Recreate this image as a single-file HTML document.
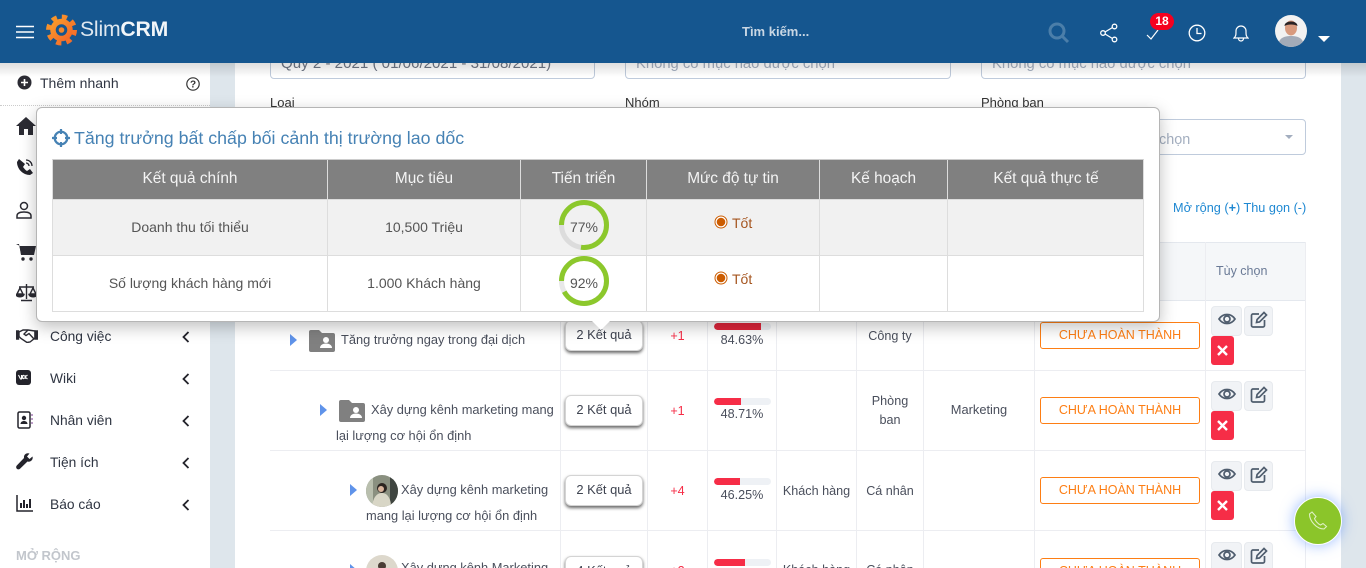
<!DOCTYPE html>
<html lang="vi"><head><meta charset="utf-8"><title>SlimCRM</title>
<style>
*{box-sizing:border-box}
html,body{margin:0;padding:0;width:1366px;height:568px;overflow:hidden;background:#dee6ec;font-family:"Liberation Sans","Noto Sans CJK SC",sans-serif;color:#4a4f5c}
body{position:relative}
#root{position:absolute;left:0;top:0;width:1366px;height:568px;overflow:hidden}
.a{position:absolute;white-space:nowrap}
.c{text-align:center}
.t{font-size:12.6px;line-height:16px}
.tr{font-size:12.85px;line-height:16px}
.card{position:absolute;left:235px;top:0;width:1106px;height:568px;background:#fff}
.inp{position:absolute;background:#fff;border:1px solid #bfcbdc;border-radius:4px}
.ph{color:#a3aebf;font-size:14.8px}
.vl{position:absolute;top:242px;width:1px;background:#ecedf1}
.hl{position:absolute;left:270px;width:1036px;height:1px;background:#ecedf1}
.kq{position:absolute;left:565px;width:78px;height:31px;background:#fff;border:1px solid #d4d4d4;border-radius:6px;box-shadow:0 2px 3px rgba(0,0,0,.6);font-size:12.9px;font-weight:500;text-align:center;line-height:27px;color:#3e4350}
.st{position:absolute;left:1040px;width:160px;height:27px;border:1px solid #fd7e14;border-radius:3px;color:#fd7e14;font-size:12.5px;text-align:center;line-height:25px;background:#fff}
.bar{position:absolute;left:714px;width:57px;height:7px;background:#eef1f5;border-radius:4px;overflow:hidden}
.bar i{display:block;height:7px;background:#f62d47;border-radius:4px 0 0 4px}
.ib{position:absolute;background:#f1f3f6;border:1px solid #e7eaee;border-radius:4px}
.del{position:absolute;left:1211px;width:23px;height:29px;background:#f62d47;border-radius:3px}
.tri{position:absolute;width:0;height:0;border-left:7px solid #5f93ea;border-top:6.5px solid transparent;border-bottom:6.5px solid transparent}
.nav{font-size:13.8px;font-weight:500;color:#2f3542;left:50px}
.hd{position:absolute;top:160px;height:39px;background:#808080;color:#f4f4f4;font-size:15.4px;line-height:38px;text-align:center;border-right:1px solid #ddd}
.td{position:absolute;height:56px;border-right:1px solid #ddd;border-bottom:1px solid #ddd;text-align:center;font-size:14px;color:#555;line-height:54px}
</style></head><body><div id="root">

<div class="card"></div>

<!-- filters -->
<div class="inp" style="left:270px;top:40px;width:325px;height:39px"></div>
<div class="inp" style="left:625px;top:40px;width:326px;height:39px"></div>
<div class="inp" style="left:981px;top:40px;width:325px;height:39px"></div>
<div class="a" style="left:281px;top:56px;font-size:15.1px;line-height:16px;color:#6e7685">Quý 2 - 2021 ( 01/06/2021 - 31/08/2021)</div>
<div class="a ph" style="left:636px;top:56px;line-height:16px">Không có mục nào được chọn</div>
<div class="a ph" style="left:992px;top:56px;line-height:16px">Không có mục nào được chọn</div>
<div class="a" style="left:270px;top:95px;font-size:13px;line-height:16px;color:#333">Loại</div>
<div class="a" style="left:625px;top:95px;font-size:13px;line-height:16px;color:#333">Nhóm</div>
<div class="a" style="left:981px;top:95px;font-size:13px;line-height:16px;color:#333">Phòng ban</div>
<div class="inp" style="left:981px;top:119px;width:325px;height:36px"></div>
<div class="a ph" style="left:1159px;top:132px;line-height:16px;font-size:14.4px">chọn</div>
<div class="a" style="left:1285px;top:135px;width:0;height:0;border-left:4px solid transparent;border-right:4px solid transparent;border-top:4px solid #a3aebf"></div>
<div class="a" style="left:1173px;top:200px;font-size:12.7px;line-height:16px;color:#1e88d2">Mở rộng (<b>+</b>) Thu gọn (-)</div>

<!-- table -->
<div class="a" style="left:1035px;top:242px;width:271px;height:59px;background:#f5f7f9;border:1px solid #e4e8ee"></div>
<div class="a" style="left:270px;top:242px;width:765px;height:58px;background:#f5f7f9"></div>
<div class="hl" style="top:370px"></div><div class="hl" style="top:450px"></div><div class="hl" style="top:530px"></div>
<div class="vl" style="left:560px;height:326px"></div><div class="vl" style="left:647px;height:326px"></div>
<div class="vl" style="left:707px;height:326px"></div><div class="vl" style="left:776px;height:326px"></div>
<div class="vl" style="left:856px;height:326px"></div><div class="vl" style="left:923px;height:326px"></div>
<div class="vl" style="left:1034px;height:326px"></div><div class="vl" style="left:1205px;height:326px"></div>
<div class="vl" style="left:1305px;height:326px"></div>
<div class="a" style="left:1216px;top:263px;font-size:12.5px;line-height:16px;font-weight:500;color:#6a7a96">Tùy chọn</div>

<!-- tree column -->
<div class="tri" style="left:290px;top:334px"></div>
<svg class="a" style="left:308px;top:329px" width="28" height="24" viewBox="0 0 28 24"><path d="M3 1h8l3 3h11a2 2 0 0 1 2 2v15a2 2 0 0 1-2 2H3a2 2 0 0 1-2-2V3a2 2 0 0 1 2-2z" fill="#808080"/><circle cx="18" cy="11" r="3" fill="#fff"/><path d="M12 19c0-6 12-6 12 0z" fill="#fff"/></svg>
<div class="a tr" style="left:341px;top:332px;color:#4a4f5c">Tăng trưởng ngay trong đại dịch</div>

<div class="tri" style="left:320px;top:404px"></div>
<svg class="a" style="left:338px;top:399px" width="28" height="24" viewBox="0 0 28 24"><path d="M3 1h8l3 3h11a2 2 0 0 1 2 2v15a2 2 0 0 1-2 2H3a2 2 0 0 1-2-2V3a2 2 0 0 1 2-2z" fill="#808080"/><circle cx="18" cy="11" r="3" fill="#fff"/><path d="M12 19c0-6 12-6 12 0z" fill="#fff"/></svg>
<div class="a tr" style="left:371px;top:402px">Xây dựng kênh marketing mang</div>
<div class="a tr" style="left:336px;top:428px">lại lượng cơ hội ổn định</div>

<div class="tri" style="left:350px;top:484px"></div>
<svg class="a" style="left:366px;top:475px" width="32" height="32" viewBox="0 0 32 32"><defs><clipPath id="cp"><circle cx="16" cy="16" r="16"/></clipPath></defs><g clip-path="url(#cp)"><rect width="32" height="32" fill="#8a9080"/><rect x="24" width="8" height="32" fill="#3f4540"/><rect x="0" width="7" height="32" fill="#b9bfae"/><path d="M6 32c1-10 5-14 10-14s9 5 9 14z" fill="#d8d6c6"/><circle cx="16" cy="13" r="5" fill="#2b2420"/><circle cx="15" cy="14" r="3" fill="#d8b49c"/></g></svg>
<div class="a tr" style="left:401px;top:482px">Xây dựng kênh marketing</div>
<div class="a tr" style="left:366px;top:508px">mang lại lượng cơ hội ổn định</div>

<div class="tri" style="left:350px;top:564px"></div>
<svg class="a" style="left:366px;top:555px" width="32" height="32" viewBox="0 0 32 32"><circle cx="16" cy="16" r="16" fill="#ddd8cc"/><circle cx="16" cy="11" r="4" fill="#4a3d35"/></svg>
<div class="a tr" style="left:401px;top:560px">Xây dựng kênh Marketing</div>

<!-- results buttons -->
<div class="kq" style="top:320px">2 Kết quả</div>
<div class="kq" style="top:395px">2 Kết quả</div>
<div class="kq" style="top:475px">2 Kết quả</div>
<div class="kq" style="top:556px">4 Kết quả</div>

<div class="a t c" style="left:648px;width:59px;top:328px;color:#f62d47">+1</div>
<div class="a t c" style="left:648px;width:59px;top:403px;color:#f62d47">+1</div>
<div class="a t c" style="left:648px;width:59px;top:483px;color:#f62d47">+4</div>
<div class="a t c" style="left:648px;width:59px;top:563px;color:#f62d47">+2</div>

<div class="bar" style="top:323px"><i style="width:47px;background:#e0263c"></i></div>
<div class="bar" style="top:398px"><i style="width:27px"></i></div>
<div class="bar" style="top:478px"><i style="width:26px"></i></div>
<div class="bar" style="top:559px"><i style="width:31px"></i></div>
<div class="a t c" style="left:708px;width:68px;top:332px">84.63%</div>
<div class="a t c" style="left:708px;width:68px;top:406px">48.71%</div>
<div class="a t c" style="left:708px;width:68px;top:487px">46.25%</div>

<div class="a t c" style="left:777px;width:79px;top:483px">Khách hàng</div>
<div class="a t c" style="left:777px;width:79px;top:562px">Khách hàng</div>
<div class="a t c" style="left:857px;width:66px;top:328px">Công ty</div>
<div class="a t c" style="left:857px;width:66px;top:393px">Phòng</div>
<div class="a t c" style="left:857px;width:66px;top:412px">ban</div>
<div class="a t c" style="left:857px;width:66px;top:483px">Cá nhân</div>
<div class="a t c" style="left:857px;width:66px;top:562px">Cá nhân</div>
<div class="a tr c" style="left:924px;width:110px;top:402px">Marketing</div>

<div class="st" style="top:322px">CHƯA HOÀN THÀNH</div>
<div class="st" style="top:397px">CHƯA HOÀN THÀNH</div>
<div class="st" style="top:477px">CHƯA HOÀN THÀNH</div>
<div class="st" style="top:558px">CHƯA HOÀN THÀNH</div>

<!-- action buttons row 1 -->
<div class="ib" style="left:1211px;top:306px;width:31px;height:30px"><svg style="position:absolute;left:5px;top:3px" width="20" height="18" viewBox="0 0 20 18" fill="none" stroke="#4f5d6e" stroke-width="1.7"><path d="M2 9c4-6 12-6 16 0-4 6-12 6-16 0z"/><circle cx="10" cy="9" r="3"/></svg></div>
<div class="ib" style="left:1244px;top:306px;width:29px;height:30px"><svg style="position:absolute;left:5px;top:4px" width="18" height="18" viewBox="0 0 18 18" fill="none" stroke="#4f5d6e" stroke-width="1.7"><path d="M9 3H3a1.500 1.500 0 0 0-1.500 1.500v10A1.500 1.500 0 0 0 3 16h10a1.500 1.500 0 0 0 1.500-1.500V9"/><path d="M6.500 11.500l.6-3L14 1.500l2.500 2.500-7 7z"/></svg></div>
<div class="del" style="top:336px"><svg style="position:absolute;left:6px;top:9px" width="11" height="11" viewBox="0 0 11 11" stroke="#fff" stroke-width="2.400"><path d="M1 1l9 9M10 1l-9 9"/></svg></div>
<!-- row 2 -->
<div class="ib" style="left:1211px;top:381px;width:31px;height:30px"><svg style="position:absolute;left:5px;top:3px" width="20" height="18" viewBox="0 0 20 18" fill="none" stroke="#4f5d6e" stroke-width="1.7"><path d="M2 9c4-6 12-6 16 0-4 6-12 6-16 0z"/><circle cx="10" cy="9" r="3"/></svg></div>
<div class="ib" style="left:1244px;top:381px;width:29px;height:30px"><svg style="position:absolute;left:5px;top:4px" width="18" height="18" viewBox="0 0 18 18" fill="none" stroke="#4f5d6e" stroke-width="1.7"><path d="M9 3H3a1.500 1.500 0 0 0-1.500 1.500v10A1.500 1.500 0 0 0 3 16h10a1.500 1.500 0 0 0 1.500-1.500V9"/><path d="M6.500 11.500l.6-3L14 1.500l2.500 2.500-7 7z"/></svg></div>
<div class="del" style="top:411px"><svg style="position:absolute;left:6px;top:9px" width="11" height="11" viewBox="0 0 11 11" stroke="#fff" stroke-width="2.400"><path d="M1 1l9 9M10 1l-9 9"/></svg></div>
<!-- row 3 -->
<div class="ib" style="left:1211px;top:461px;width:31px;height:30px"><svg style="position:absolute;left:5px;top:3px" width="20" height="18" viewBox="0 0 20 18" fill="none" stroke="#4f5d6e" stroke-width="1.7"><path d="M2 9c4-6 12-6 16 0-4 6-12 6-16 0z"/><circle cx="10" cy="9" r="3"/></svg></div>
<div class="ib" style="left:1244px;top:461px;width:29px;height:30px"><svg style="position:absolute;left:5px;top:4px" width="18" height="18" viewBox="0 0 18 18" fill="none" stroke="#4f5d6e" stroke-width="1.7"><path d="M9 3H3a1.500 1.500 0 0 0-1.500 1.500v10A1.500 1.500 0 0 0 3 16h10a1.500 1.500 0 0 0 1.500-1.500V9"/><path d="M6.500 11.500l.6-3L14 1.500l2.500 2.500-7 7z"/></svg></div>
<div class="del" style="top:491px"><svg style="position:absolute;left:6px;top:9px" width="11" height="11" viewBox="0 0 11 11" stroke="#fff" stroke-width="2.400"><path d="M1 1l9 9M10 1l-9 9"/></svg></div>
<!-- row 4 -->
<div class="ib" style="left:1211px;top:542px;width:31px;height:30px"><svg style="position:absolute;left:5px;top:3px" width="20" height="18" viewBox="0 0 20 18" fill="none" stroke="#4f5d6e" stroke-width="1.7"><path d="M2 9c4-6 12-6 16 0-4 6-12 6-16 0z"/><circle cx="10" cy="9" r="3"/></svg></div>
<div class="ib" style="left:1244px;top:542px;width:29px;height:30px"><svg style="position:absolute;left:5px;top:4px" width="18" height="18" viewBox="0 0 18 18" fill="none" stroke="#4f5d6e" stroke-width="1.7"><path d="M9 3H3a1.500 1.500 0 0 0-1.500 1.500v10A1.500 1.500 0 0 0 3 16h10a1.500 1.500 0 0 0 1.500-1.500V9"/><path d="M6.500 11.500l.6-3L14 1.500l2.500 2.500-7 7z"/></svg></div>

<!-- sidebar -->
<div class="a" style="left:0;top:63px;width:210px;height:505px;background:#fff"></div>
<svg class="a" style="left:17px;top:75px" width="15" height="15" viewBox="0 0 15 15"><circle cx="7.500" cy="7.500" r="7" fill="#2b2b33"/><path d="M7.500 4v7M4 7.500h7" stroke="#fff" stroke-width="1.600"/></svg>
<div class="a" style="left:40px;top:75px;font-size:14px;line-height:16px;font-weight:500;color:#2f3542">Thêm nhanh</div>
<svg class="a" style="left:186px;top:77px" width="14" height="14" viewBox="0 0 14 14" fill="none"><circle cx="7" cy="7" r="6.200" stroke="#333" stroke-width="1.200"/><text x="7" y="10.500" font-size="10" font-weight="700" text-anchor="middle" fill="#333" font-family="Liberation Sans">?</text></svg>
<div class="a" style="left:0;top:105px;width:210px;border-top:1px dotted #ccc"></div>

<svg class="a" style="left:16px;top:117px" width="20" height="18" viewBox="0 0 20 18"><path d="M10 0L0 9h3v9h5v-6h4v6h5V9h3z" fill="#2b2b33"/></svg>
<svg class="a" style="left:16px;top:158px" width="18" height="18" viewBox="0 0 18 18" fill="none"><path d="M3 1L1 4c0 7 6 13 13 13l3-2-3-4-3 2c-2-1-3-3-4-4l2-3z" fill="#23232b"/><path d="M10 5a3 3 0 0 1 3 3M10 2a6 6 0 0 1 6 6" stroke="#23232b" stroke-width="1.300"/></svg>
<svg class="a" style="left:16px;top:201px" width="16" height="18" viewBox="0 0 16 18" fill="none" stroke="#2b2b33" stroke-width="1.500"><circle cx="8" cy="5" r="3.500"/><path d="M1 17v-2c0-3 3-4 7-4s7 1 7 4v2z"/></svg>
<svg class="a" style="left:16px;top:243px" width="20" height="18" viewBox="0 0 20 18"><path d="M0 1h3l2 10h12l2-8H4" fill="#2b2b33"/><path d="M3.500 3H20l-2 9H5z" fill="#2b2b33"/><circle cx="7" cy="16" r="1.700" fill="#2b2b33"/><circle cx="15" cy="16" r="1.700" fill="#2b2b33"/></svg>
<svg class="a" style="left:16px;top:284px" width="21" height="18" viewBox="0 0 21 18" fill="none" stroke="#2b2b33" stroke-width="1.400"><path d="M10.500 0v15M5 16.500h11M3 3h15"/><path d="M4 4L1 10h6zM17 4l-3 6h6z"/><path d="M0 10.500c1 3 7 3 8 0zM13 10.500c1 3 7 3 8 0z" fill="#2b2b33"/></svg>
<svg class="a" style="left:16px;top:329px" width="22" height="14" viewBox="0 0 22 14" fill="none" stroke="#2b2b33" stroke-width="1.400"><path d="M0 2h2.500v8H0z" fill="#2b2b33"/><path d="M19 2h3v8h-3z" fill="#2b2b33"/><path d="M3 3l4-2h5l7 1v7l-5 4-3 .5-6-4-2-2z"/><path d="M12 1L8 5l2 1.500 3-2 5 5.500"/></svg>
<svg class="a" style="left:16px;top:370px" width="15" height="15" viewBox="0 0 15 15"><rect width="15" height="15" rx="3" fill="#23232b"/><path d="M2.500 5l2 4h1V5M6 9V5M6 7l2-2M6 7l2 2M9 5v4M9 7l2.500-2M9 7l2.500 2" stroke="#fff" stroke-width="1.100" fill="none"/></svg>
<svg class="a" style="left:17px;top:411px" width="16" height="18" viewBox="0 0 16 18" fill="none"><rect x="1" y="1" width="12" height="16" rx="1.500" stroke="#23232b" stroke-width="1.500"/><circle cx="7" cy="7" r="2.200" fill="#23232b"/><path d="M3.500 13c0-4 7-4 7 0z" fill="#23232b"/><path d="M15 3v12" stroke="#7a3b8f" stroke-width="1" stroke-dasharray="2 2"/></svg>
<svg class="a" style="left:16px;top:453px" width="17" height="17" viewBox="0 0 17 17"><path d="M16.500 3.500l-3 2.500-2.500-2.500L13.500.500c-3-1-6 1-5.500 4.500L.800 12.500a2 2 0 0 0 3.200 3.200L11.500 8.500c3 1 6-2 5-5z" fill="#23232b"/></svg>
<svg class="a" style="left:16px;top:495px" width="18" height="17" viewBox="0 0 18 17" fill="none" stroke="#23232b"><path d="M1 0v16h16" stroke-width="1.500"/><path d="M5 8v5M8 5v8M11 9v4M14 4v9" stroke-width="2"/></svg>
<div class="a nav" style="top:329px;line-height:16px">Công việc</div>
<div class="a nav" style="top:371px;line-height:16px">Wiki</div>
<div class="a nav" style="top:413px;line-height:16px">Nhân viên</div>
<div class="a nav" style="top:455px;line-height:16px">Tiện ích</div>
<div class="a nav" style="top:497px;line-height:16px">Báo cáo</div>
<svg class="a" style="left:182px;top:331px" width="8" height="12" viewBox="0 0 8 12"><path d="M6.500 1L1.500 6l5 5" fill="none" stroke="#23232b" stroke-width="1.800"/></svg>
<svg class="a" style="left:182px;top:373px" width="8" height="12" viewBox="0 0 8 12"><path d="M6.500 1L1.500 6l5 5" fill="none" stroke="#23232b" stroke-width="1.800"/></svg>
<svg class="a" style="left:182px;top:415px" width="8" height="12" viewBox="0 0 8 12"><path d="M6.500 1L1.500 6l5 5" fill="none" stroke="#23232b" stroke-width="1.800"/></svg>
<svg class="a" style="left:182px;top:457px" width="8" height="12" viewBox="0 0 8 12"><path d="M6.500 1L1.500 6l5 5" fill="none" stroke="#23232b" stroke-width="1.800"/></svg>
<svg class="a" style="left:182px;top:499px" width="8" height="12" viewBox="0 0 8 12"><path d="M6.500 1L1.500 6l5 5" fill="none" stroke="#23232b" stroke-width="1.800"/></svg>
<div class="a" style="left:16px;top:548px;font-size:13px;line-height:16px;font-weight:700;color:#c2c6cc">MỞ RỘNG</div>

<!-- header shadow -->
<div class="a" style="left:0;top:63px;width:1366px;height:14px;background:linear-gradient(rgba(0,0,0,.13),rgba(0,0,0,0))"></div>

<!-- header -->
<div class="a" style="left:0;top:0;width:1366px;height:63px;background:#15568f"></div>
<svg class="a" style="left:16px;top:25px" width="18" height="14" viewBox="0 0 18 14" stroke="#fff" stroke-width="1.400"><path d="M0 1.500h18M0 7h18M0 12.500h18"/></svg>
<svg class="a" style="left:46px;top:14px" width="32" height="32" viewBox="0 0 32 32"><defs><linearGradient id="g" x1="0" y1="0" x2="1" y2="1"><stop offset="0" stop-color="#f99a2a"/><stop offset="1" stop-color="#f4692a"/></linearGradient></defs><circle cx="15.500" cy="16" r="13" fill="none" stroke="url(#g)" stroke-width="5" stroke-dasharray="5.200 5"/><circle cx="15.500" cy="16" r="8.500" fill="none" stroke="url(#g)" stroke-width="5.500"/><circle cx="15.500" cy="16" r="2.800" fill="#f5872b"/></svg>
<div class="a" style="left:80px;top:16px;font-size:21.2px;line-height:28px;color:#dfe8f0;letter-spacing:-.2px">Slim<b style="color:#f2f6f9">CRM</b></div>
<div class="a" style="left:742px;top:24px;font-size:13px;line-height:16px;font-weight:700;color:#c9d7e4">Tìm kiếm...</div>
<svg class="a" style="left:1048px;top:22px" width="22" height="22" viewBox="0 0 22 22" fill="none" stroke="#4b7ea9" stroke-width="3"><circle cx="9" cy="9" r="7"/><path d="M14 14l6 6"/></svg>
<svg class="a" style="left:1100px;top:23px" width="18" height="20" viewBox="0 0 18 20" fill="none" stroke="#fff" stroke-width="1.300"><circle cx="14.500" cy="3.500" r="2.300"/><circle cx="3" cy="10" r="2.300"/><circle cx="14.500" cy="16.500" r="2.300"/><path d="M5 9l7.500-4.500M5 11l7.500 4.500"/></svg>
<svg class="a" style="left:1146px;top:29px" width="13" height="11" viewBox="0 0 13 11" fill="none" stroke="#fff" stroke-width="1.200"><path d="M1 6l4 4 7-9"/></svg>
<div class="a" style="left:1150px;top:13px;width:24px;height:17px;background:#f5001f;border-radius:9px;color:#fff;font-size:12px;font-weight:700;line-height:17px;text-align:center">18</div>
<svg class="a" style="left:1188px;top:24px" width="18" height="18" viewBox="0 0 18 18" fill="none" stroke="#fff" stroke-width="1.300"><circle cx="9" cy="9" r="7.800"/><path d="M9 4v5.500h4.500"/></svg>
<svg class="a" style="left:1233px;top:24px" width="16" height="18" viewBox="0 0 16 18" fill="none" stroke="#fff" stroke-width="1.200"><path d="M1 14c2-2 2-3 2-7a5 5 0 0 1 10 0c0 4 0 5 2 7z"/><path d="M5.500 14.500a2.500 2.500 0 0 0 5 0"/></svg>
<svg class="a" style="left:1275px;top:15px" width="32" height="32" viewBox="0 0 32 32"><defs><clipPath id="ph"><circle cx="16" cy="16" r="16"/></clipPath></defs><g clip-path="url(#ph)"><rect width="32" height="32" fill="#f2f2f2"/><path d="M3 32c0-9 6-11 13-11s13 2 13 11z" fill="#a3abb8"/><ellipse cx="16" cy="13" rx="6" ry="7.500" fill="#d89a7e"/><path d="M9.500 11c0-6 13-6 13 0-3-2-10-2-13 0z" fill="#2a2325"/></g></svg>
<div class="a" style="left:1318px;top:36px;width:0;height:0;border-left:6px solid transparent;border-right:6px solid transparent;border-top:6px solid #fff"></div>

<!-- popover -->
<div class="a" style="left:36px;top:107px;width:1124px;height:215px;background:#fff;border:1px solid #b5b5b5;border-radius:6px;box-shadow:0 5px 16px rgba(0,0,0,.25)"></div>
<div class="a" style="left:592px;top:321px;width:0;height:0;border-left:9px solid transparent;border-right:9px solid transparent;border-top:9px solid #fff"></div>
<svg class="a" style="left:52px;top:129px" width="18" height="18" viewBox="0 0 18 18" fill="none" stroke="#4682b4"><circle cx="9" cy="9" r="6.300" stroke-width="2.200"/><path d="M9 0v5M9 13v5M0 9h5M13 9h5" stroke-width="2.200"/></svg>
<div class="a" style="left:74px;top:127px;font-size:17.8px;line-height:22px;color:#4682b4">Tăng trưởng bất chấp bối cảnh thị trường lao dốc</div>

<div class="hd" style="left:53px;width:275px">Kết quả chính</div>
<div class="hd" style="left:328px;width:193px">Mục tiêu</div>
<div class="hd" style="left:521px;width:126px">Tiến triển</div>
<div class="hd" style="left:647px;width:173px">Mức độ tự tin</div>
<div class="hd" style="left:820px;width:128px">Kế hoạch</div>
<div class="hd" style="left:948px;width:196px;border-right:0">Kết quả thực tế</div>

<div class="a" style="left:52px;top:159px;width:1092px;height:153px;border:1px solid #ddd;border-top-color:#ccc"></div>
<div class="a" style="left:53px;top:199px;width:1090px;height:1px;background:#ddd"></div>

<div class="td" style="left:53px;top:200px;width:275px;background:#f1f1f1">Doanh thu tối thiểu</div>
<div class="td" style="left:328px;top:200px;width:193px;background:#f1f1f1">10,500 Triệu</div>
<div class="td" style="left:521px;top:200px;width:126px;background:#f1f1f1"></div>
<div class="td" style="left:647px;top:200px;width:173px;background:#f1f1f1"></div>
<div class="td" style="left:820px;top:200px;width:128px;background:#f1f1f1"></div>
<div class="td" style="left:948px;top:200px;width:195px;background:#f1f1f1;border-right:0"></div>

<div class="td" style="left:53px;top:256px;width:275px">Số lượng khách hàng mới</div>
<div class="td" style="left:328px;top:256px;width:193px">1.000 Khách hàng</div>
<div class="td" style="left:521px;top:256px;width:126px"></div>
<div class="td" style="left:647px;top:256px;width:173px"></div>
<div class="td" style="left:820px;top:256px;width:128px"></div>
<div class="td" style="left:948px;top:256px;width:195px;border-right:0"></div>

<svg class="a" style="left:559px;top:200px" width="50" height="50" viewBox="0 0 50 50" fill="none"><circle cx="25" cy="25" r="22.500" stroke="#dcdcdc" stroke-width="5"/><circle cx="25" cy="25" r="22.500" stroke="#8cc82c" stroke-width="5" stroke-dasharray="108.900 141.400" transform="rotate(180 25 25)"/></svg>
<div class="a c" style="left:559px;top:219px;width:50px;font-size:14px;line-height:16px;color:#555">77%</div>
<svg class="a" style="left:559px;top:256px" width="50" height="50" viewBox="0 0 50 50" fill="none"><circle cx="25" cy="25" r="22.500" stroke="#e8e8e8" stroke-width="5"/><circle cx="25" cy="25" r="22.500" stroke="#8cc82c" stroke-width="5" stroke-dasharray="130 141.400" transform="rotate(180 25 25)"/></svg>
<div class="a c" style="left:559px;top:275px;width:50px;font-size:14px;line-height:16px;color:#555">92%</div>

<svg class="a" style="left:714px;top:215px" width="14" height="14" viewBox="0 0 14 14"><circle cx="7" cy="7" r="6" fill="#fff" stroke="#cc5c00"/><circle cx="7" cy="7" r="4.300" fill="#cc5c00"/></svg>
<div class="a" style="left:732px;top:215px;font-size:14px;line-height:16px;color:#a5551f">Tốt</div>
<svg class="a" style="left:714px;top:271px" width="14" height="14" viewBox="0 0 14 14"><circle cx="7" cy="7" r="6" fill="#fff" stroke="#cc5c00"/><circle cx="7" cy="7" r="4.300" fill="#cc5c00"/></svg>
<div class="a" style="left:732px;top:271px;font-size:14px;line-height:16px;color:#a5551f">Tốt</div>

<!-- phone fab -->
<div class="a" style="left:1294px;top:497px;width:48px;height:48px;border-radius:50%;background:#8bc52a;border:1px solid #fff;box-shadow:0 0 14px rgba(70,130,255,.55)"></div>
<svg class="a" style="left:1308px;top:511px" width="20" height="20" viewBox="0 0 20 20" fill="none" stroke="#dff0c4" stroke-width="1.100"><path d="M4 1L1.500 3c0 7 7 15 14.500 15l2.500-2.500-3.500-3-2.500 1.500C10 13 7 9.500 6.500 7.500L8 5.500z"/></svg>

</div></body></html>
